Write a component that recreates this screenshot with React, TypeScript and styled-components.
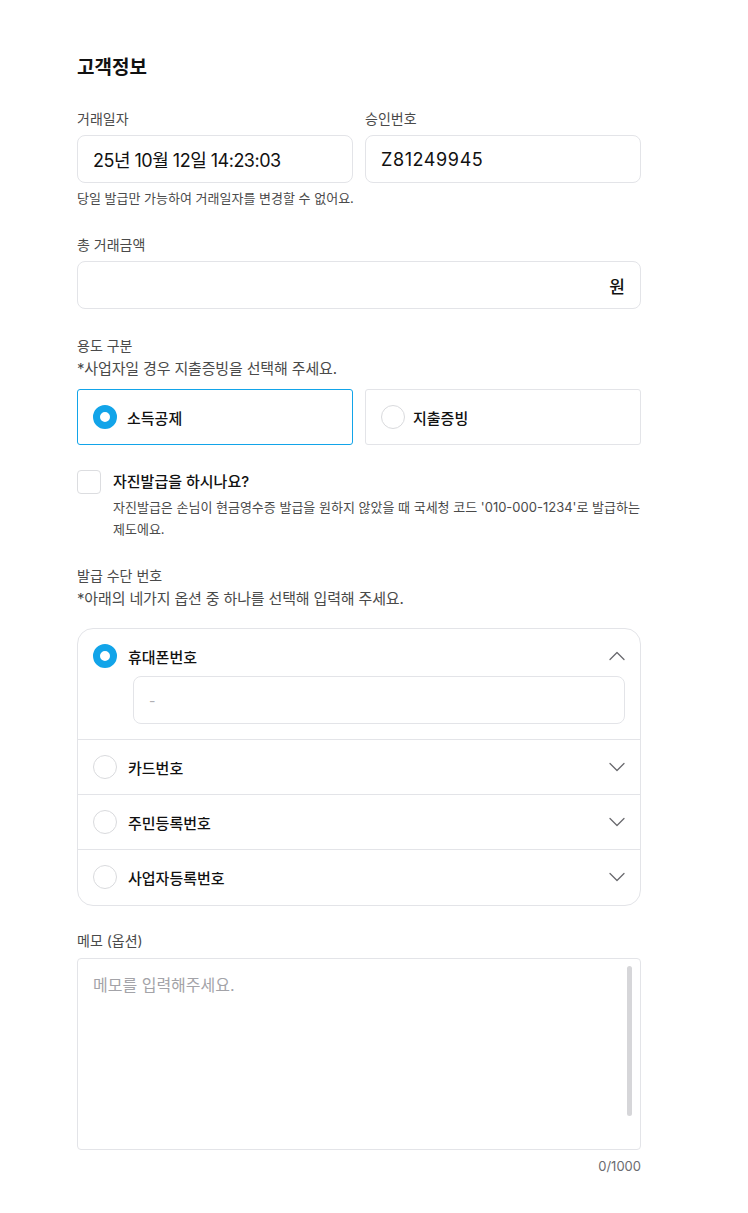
import React from "react";
import styled, { createGlobalStyle } from "styled-components";

const Global = createGlobalStyle`
  html, body { margin: 0; padding: 0; background: #ffffff; }
  body { font-family: Inter, "Noto Sans CJK KR", "Noto Sans", sans-serif; color: #111; -webkit-font-smoothing: antialiased; }
  * { box-sizing: border-box; }
`;

const Page = styled.div`
  padding: 56px 0 40px 77px;
`;

const Form = styled.div`
  width: 564px;
  display: flex;
  flex-direction: column;
`;

const Title = styled.h2`
  margin: 0 0 29px;
  font-size: 19px;
  line-height: 24px;
  font-weight: 700;
  color: #111;
`;

const Section = styled.div<{ $mt?: number }>`
  display: flex;
  flex-direction: column;
  margin-top: ${(p) => p.$mt ?? 0}px;
`;

const Row = styled.div`
  display: grid;
  grid-template-columns: 1fr 1fr;
  gap: 12px;
`;

const Field = styled.div`
  display: flex;
  flex-direction: column;
`;

const Label = styled.div<{ $mb?: number }>`
  font-size: 14px;
  line-height: 20px;
  color: #4a4a4a;
  margin-bottom: ${(p) => p.$mb ?? 6}px;
`;

const SubLabel = styled.div<{ $mb: number }>`
  font-size: 15px;
  line-height: 20px;
  letter-spacing: -0.15px;
  color: #4a4a4a;
  margin-top: 3px;
  margin-bottom: ${(p) => p.$mb}px;
`;

const InputBox = styled.div<{ $align?: string; $ls?: number }>`
  height: 48px;
  border: 1px solid #e3e4e8;
  border-radius: 8px;
  display: flex;
  align-items: center;
  justify-content: ${(p) => p.$align ?? "flex-start"};
  padding: 0 15px;
  font-size: 18px;
  letter-spacing: ${(p) => p.$ls ?? 0}px;
  color: #111;
`;

const Unit = styled.span`
  font-size: 17px;
  font-weight: 500;
`;

const Helper = styled.div`
  margin-top: 6px;
  font-size: 13px;
  line-height: 18px;
  color: #4a4a4a;
`;

const Radio = styled.span<{ $on?: boolean }>`
  width: 24px;
  height: 24px;
  border-radius: 50%;
  flex: none;
  background: #fff;
  border: ${(p) => (p.$on ? "7.5px solid #12a4e9" : "1px solid #d9dadd")};
`;

const ChoiceCard = styled.div<{ $on?: boolean }>`
  height: 56px;
  border: 1px solid ${(p) => (p.$on ? "#12a4e9" : "#e3e4e8")};
  border-radius: 3px;
  display: flex;
  align-items: center;
  gap: ${(p) => (p.$on ? 10 : 8)}px;
  padding: 0 15px;
  font-size: 15px;
  font-weight: 500;
  color: #111;
`;

const CheckRow = styled.div`
  margin-top: 25px;
  display: grid;
  grid-template-columns: 24px 1fr;
  column-gap: 12px;
`;

const CheckBox = styled.span`
  width: 24px;
  height: 24px;
  border: 1px solid #dcdde0;
  border-radius: 4px;
`;

const CheckTitle = styled.div`
  font-size: 15px;
  line-height: 24px;
  font-weight: 500;
  color: #111;
`;

const CheckDesc = styled.div`
  grid-column: 2;
  margin-top: 2px;
  font-size: 13px;
  line-height: 22px;
  color: #4a4a4a;
`;

const Accordion = styled.div`
  border: 1px solid #e3e4e8;
  border-radius: 16px;
  overflow: hidden;
`;

const Item = styled.div`
  padding: 15px 15px 15px;
  display: flex;
  flex-direction: column;
  gap: 8px;
  & + & { border-top: 1px solid #e3e4e8; }
  &:last-child { padding-bottom: 16px; }
`;

const ItemHead = styled.div`
  display: flex;
  align-items: center;
  gap: 11px;
  height: 24px;
`;

const ItemLabel = styled.span`
  flex: 1;
  font-size: 15px;
  font-weight: 500;
  color: #111;
`;

const PhoneInput = styled.div`
  margin-left: 40px;
  height: 48px;
  border: 1px solid #e3e4e8;
  border-radius: 8px;
  display: flex;
  align-items: center;
  padding: 0 15px;
  font-size: 14px;
  color: #b0b0b4;
`;

const MemoBox = styled.div`
  position: relative;
  height: 192px;
  border: 1px solid #e3e4e8;
  border-radius: 4px;
  padding: 14px 15px;
  font-size: 16px;
  line-height: 24px;
  color: #a3a3a8;
`;

const ScrollThumb = styled.span`
  position: absolute;
  right: 8px;
  top: 7px;
  width: 5px;
  height: 150px;
  border-radius: 3px;
  background: #d6d6d9;
`;

const Counter = styled.div`
  margin-top: 7px;
  text-align: right;
  font-size: 13px;
  line-height: 18px;
  color: #6b6b6f;
`;

const Chevron = ({ up }: { up?: boolean }) => (
  <svg width="16" height="10" viewBox="0 0 16 10" fill="none">
    <polyline
      points={up ? "1,8.5 8,1.5 15,8.5" : "1,1.5 8,8.5 15,1.5"}
      stroke="#6a6a6e"
      strokeWidth="1.3"
      strokeLinecap="round"
      strokeLinejoin="round"
    />
  </svg>
);

const methods = ["카드번호", "주민등록번호", "사업자등록번호"];

export default function App() {
  return (
    <>
      <Global />
      <Page>
        <Form>
          <Title>고객정보</Title>
          <Section>
            <Row>
              <Field>
                <Label>거래일자</Label>
                <InputBox $ls={-0.5}>25년 10월 12일 14:23:03</InputBox>
              </Field>
              <Field>
                <Label>승인번호</Label>
                <InputBox $ls={0.6}>Z81249945</InputBox>
              </Field>
            </Row>
            <Helper>당일 발급만 가능하여 거래일자를 변경할 수 없어요.</Helper>
          </Section>

          <Section $mt={28}>
            <Label>총 거래금액</Label>
            <InputBox $align="flex-end">
              <Unit>원</Unit>
            </InputBox>
          </Section>

          <Section $mt={27}>
            <Label $mb={0}>용도 구분</Label>
            <SubLabel $mb={10}>*사업자일 경우 지출증빙을 선택해 주세요.</SubLabel>
            <Row>
              <ChoiceCard $on>
                <Radio $on />
                소득공제
              </ChoiceCard>
              <ChoiceCard>
                <Radio />
                지출증빙
              </ChoiceCard>
            </Row>
          </Section>

          <CheckRow>
            <CheckBox />
            <CheckTitle>자진발급을 하시나요?</CheckTitle>
            <CheckDesc>
              자진발급은 손님이 현금영수증 발급을 원하지 않았을 때 국세청 코드 '010-000-1234'로 발급하는 제도에요.
            </CheckDesc>
          </CheckRow>

          <Section $mt={26}>
            <Label $mb={0}>발급 수단 번호</Label>
            <SubLabel $mb={19}>*아래의 네가지 옵션 중 하나를 선택해 입력해 주세요.</SubLabel>
            <Accordion>
              <Item>
                <ItemHead>
                  <Radio $on />
                  <ItemLabel>휴대폰번호</ItemLabel>
                  <Chevron up />
                </ItemHead>
                <PhoneInput>-</PhoneInput>
              </Item>
              {methods.map((m) => (
                <Item key={m}>
                  <ItemHead>
                    <Radio />
                    <ItemLabel>{m}</ItemLabel>
                    <Chevron />
                  </ItemHead>
                </Item>
              ))}
            </Accordion>
          </Section>

          <Section $mt={25}>
            <Label $mb={7}>메모 (옵션)</Label>
            <MemoBox>
              메모를 입력해주세요.
              <ScrollThumb />
            </MemoBox>
            <Counter>0/1000</Counter>
          </Section>
        </Form>
      </Page>
    </>
  );
}
